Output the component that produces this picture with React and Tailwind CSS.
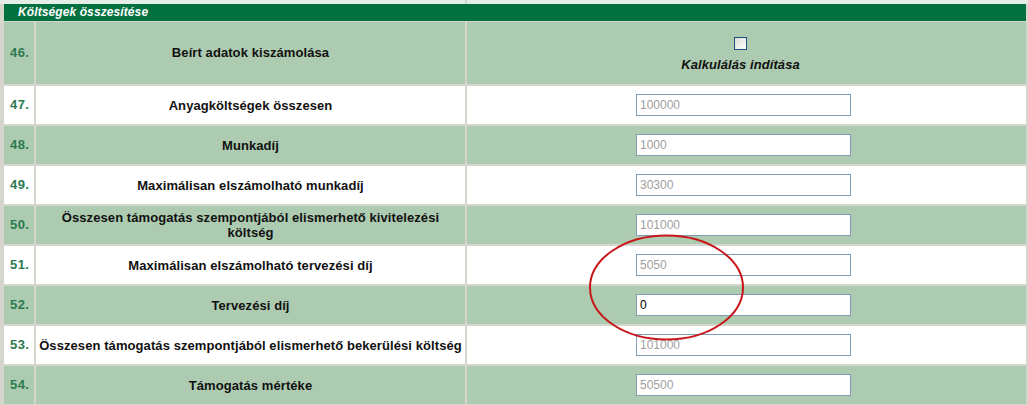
import React from "react";

const rows = [
  { n: "47.", label: "Anyagköltségek összesen", v: "100000", bg: "white" },
  { n: "48.", label: "Munkadíj", v: "1000", bg: "green" },
  { n: "49.", label: "Maximálisan elszámolható munkadíj", v: "30300", bg: "white" },
  { n: "50.", label: "Összesen támogatás szempontjából elismerhető kivitelezési", label2: "költség", v: "101000", bg: "green" },
  { n: "51.", label: "Maximálisan elszámolható tervezési díj", v: "5050", bg: "white" },
  { n: "52.", label: "Tervezési díj", v: "0", bg: "green", active: true },
  { n: "53.", label: "Összesen támogatás szempontjából elismerhető bekerülési költség", v: "101000", bg: "white" },
  { n: "54.", label: "Támogatás mértéke", v: "50500", bg: "green" },
];

function Cell({ bg, className = "", children }) {
  return (
    <div className={(bg === "green" ? "bg-[#adcbb0] " : "bg-white ") + className}>
      {children}
    </div>
  );
}

export default function App() {
  return (
    <div
      className="relative w-[1028px] h-[405px] overflow-hidden bg-[#d6d6cf] text-[13px] text-[#111]"
      style={{ fontFamily: '"Liberation Sans", Arial, sans-serif' }}
    >
      <div className="h-[4px] flex bg-[#e6ece6]">
        <div className="w-[465px]" />
        <div className="w-[2px] bg-[#cfd5cf]" />
      </div>
      <div className="pl-[4px] pr-[2px]">
        <div className="h-[17px] bg-[#03703f] text-white font-bold italic text-[12px] leading-[17px] pl-[14px] tracking-[0.1px]">
          Költségek összesítése
        </div>
        <div className="grid grid-cols-[30px_429px_559px] gap-[2px] mt-[1px]">
          <Cell bg="green" className="h-[62px] flex items-center pl-[6px] font-bold text-[#2b7a4f] tracking-[0.4px]">46.</Cell>
          <Cell bg="green" className="h-[62px] flex items-center justify-center font-bold tracking-[0.08px]">Beírt adatok kiszámolása</Cell>
          <Cell bg="green" className="h-[62px] flex flex-col items-center pr-[12px] pt-[15px]">
            <div className="w-[13px] h-[13px] border border-[#1c5180] bg-gradient-to-br from-[#dcdcd7] to-white" />
            <div className="mt-[7px] font-bold italic leading-[15px] tracking-[0.08px]">Kalkulálás indítása</div>
          </Cell>
          {rows.map((r) => (
            <React.Fragment key={r.n}>
              <Cell bg={r.bg} className="h-[38px] flex items-center pl-[6px] font-bold text-[#2b7a4f] tracking-[0.4px]">{r.n}</Cell>
              <Cell bg={r.bg} className="h-[38px] flex flex-col items-center justify-center text-center font-bold leading-[15px] tracking-[0.08px]">
                <span>{r.label}</span>
                {r.label2 && <span>{r.label2}</span>}
              </Cell>
              <Cell bg={r.bg} className="h-[38px] flex items-center pl-[169px]">
                <div
                  className={
                    "w-[215px] h-[22px] border border-[#7f9db9] bg-white flex items-center pl-[3px] text-[12px] " +
                    (r.active ? "text-black" : "text-[#a0a0a0]")
                  }
                >
                  {r.v}
                </div>
              </Cell>
            </React.Fragment>
          ))}
        </div>
      </div>
      <svg className="absolute left-0 top-0" width="1028" height="405">
        <ellipse cx="666.5" cy="287.5" rx="76.5" ry="52" fill="none" stroke="#c8161b" strokeWidth="2" />
      </svg>
    </div>
  );
}
